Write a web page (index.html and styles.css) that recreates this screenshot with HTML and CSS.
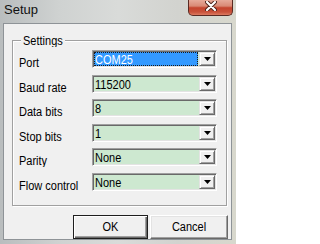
FILE: index.html
```html
<!DOCTYPE html>
<html>
<head>
<meta charset="utf-8">
<link rel="stylesheet" href="styles.css">
</head>
<body>
<div class="window">
  <div class="titlebar">
    <span class="title">Setup</span>
    <div class="close">
      <svg width="12" height="10" viewBox="0 0 12 10">
        <path d="M2 1 L10 9 M10 1 L2 9" stroke="#4a2018" stroke-width="4" stroke-linecap="round"/>
        <path d="M2 1 L10 9 M10 1 L2 9" stroke="#ffffff" stroke-width="2.2" stroke-linecap="round"/>
      </svg>
    </div>
  </div>
  <div class="client">
    <div class="group">
      <span class="legend"><span class="t">Settings</span></span>
      <div class="rows">
        <span class="label"><span class="t">Port</span></span>
        <div class="combo"><div class="value sel"><span class="t">COM25</span></div><div class="drop"><svg width="7" height="4" viewBox="0 0 7 4"><polygon points="0,0 7,0 3.5,4" fill="#000"/></svg></div></div>
        <span class="label"><span class="t">Baud rate</span></span>
        <div class="combo"><div class="value"><span class="t">115200</span></div><div class="drop"><svg width="7" height="4" viewBox="0 0 7 4"><polygon points="0,0 7,0 3.5,4" fill="#000"/></svg></div></div>
        <span class="label"><span class="t">Data bits</span></span>
        <div class="combo"><div class="value"><span class="t">8</span></div><div class="drop"><svg width="7" height="4" viewBox="0 0 7 4"><polygon points="0,0 7,0 3.5,4" fill="#000"/></svg></div></div>
        <span class="label"><span class="t">Stop bits</span></span>
        <div class="combo"><div class="value"><span class="t">1</span></div><div class="drop"><svg width="7" height="4" viewBox="0 0 7 4"><polygon points="0,0 7,0 3.5,4" fill="#000"/></svg></div></div>
        <span class="label"><span class="t">Parity</span></span>
        <div class="combo"><div class="value"><span class="t">None</span></div><div class="drop"><svg width="7" height="4" viewBox="0 0 7 4"><polygon points="0,0 7,0 3.5,4" fill="#000"/></svg></div></div>
        <span class="label"><span class="t">Flow control</span></span>
        <div class="combo"><div class="value"><span class="t">None</span></div><div class="drop"><svg width="7" height="4" viewBox="0 0 7 4"><polygon points="0,0 7,0 3.5,4" fill="#000"/></svg></div></div>
      </div>
    </div>
    <div class="buttons">
      <div class="btn default"><span class="t">OK</span></div>
      <div class="btn"><span class="t">Cancel</span></div>
    </div>
  </div>
</div>
</body>
</html>
```
FILE: styles.css
```css
html, body {
  margin: 0;
  padding: 0;
}
body {
  width: 236px;
  height: 244px;
  overflow: hidden;
  font-family: "Liberation Sans", Arial, sans-serif;
  font-size: 11px;
  color: #000;
}
.window {
  width: 236px;
  height: 244px;
  display: flex;
  flex-direction: column;
  background: linear-gradient(90deg, #b9bdbe 0%, #cfd2d1 25%, #d9dbd9 50%, #d2d3cf 75%, #d8d8cd 100%);
}
.titlebar {
  height: 23px;
  flex: none;
  display: flex;
  justify-content: space-between;
  align-items: flex-start;
}
.title {
  margin: 2px 0 0 4px;
  font-size: 13px;
  line-height: 15px;
  color: #111;
}
.close {
  width: 45px;
  height: 16px;
  box-sizing: border-box;
  margin-right: 3px;
  border: 1px solid #5a2a22;
  border-top: none;
  border-radius: 0 0 5px 5px;
  background: linear-gradient(#e6aa9a 0%, #d98a76 40%, #c4442e 52%, #c9523a 80%, #dc7a60 100%);
  display: flex;
  justify-content: center;
  align-items: center;
  padding-bottom: 3px;
}
.client {
  flex: 1;
  margin: 0 4px 4px 3px;
  border: 1px solid #8e9397;
  background: #f0f0f0;
  display: flex;
  flex-direction: column;
}
.t {
  display: inline-block;
  transform: scaleY(1.15);
  white-space: nowrap;
}
.group {
  position: relative;
  margin: 16px 4px 0 8px;
  border: 1px solid #a0a0a0;
  box-shadow: inset 1px 1px 0 #fff, 1px 1px 0 #fff;
  padding: 9px 9px 13px 6px;
}
.legend {
  position: absolute;
  top: -7px;
  left: 8px;
  padding: 0 2px;
  line-height: 13px;
  background: #f0f0f0;
}
.rows {
  display: grid;
  grid-template-columns: 73px 125px;
  row-gap: 5.6px;
}
.label {
  padding-top: 6px;
  line-height: 13px;
}
.combo {
  height: 18px;
  box-sizing: border-box;
  border: 1px solid;
  border-color: #a0a0a0 #ffffff #ffffff #a0a0a0;
  box-shadow: inset 1px 1px 0 #696969, inset -1px -1px 0 #e3e3e3;
  padding: 1px;
  background: #cde8d0;
  display: flex;
}
.value {
  flex: 1;
  line-height: 13px;
  padding: 1px 0 0 1px;
}
.value.sel {
  background: #3399ff;
  color: #fff;
  outline: 1px dotted #1a1a1a;
  outline-offset: -1px;
  margin-right: 1px;
}
.drop {
  width: 16px;
  flex: none;
  box-sizing: border-box;
  background: #f0f0f0;
  border: 1px solid;
  border-color: #e3e3e3 #696969 #696969 #e3e3e3;
  box-shadow: inset 1px 1px 0 #fff, inset -1px -1px 0 #a0a0a0;
  display: flex;
  justify-content: center;
  align-items: center;
}
.buttons {
  display: flex;
  justify-content: flex-end;
  gap: 2px;
  margin-top: 9px;
  padding-right: 3px;
}
.btn {
  width: 78px;
  height: 24px;
  box-sizing: border-box;
  border: 1px solid;
  border-color: #fff #696969 #696969 #fff;
  box-shadow: inset -1px -1px 0 #a0a0a0, inset 1px 1px 0 #e3e3e3;
  background: #f0f0f0;
  display: flex;
  align-items: center;
  justify-content: center;
  line-height: 13px;
}
.btn.default {
  width: 75px;
  border: 1px solid #1e1e1e;
  box-shadow: inset 1px 1px 0 #fff, inset -1px -1px 0 #696969, inset -2px -2px 0 #a0a0a0;
}
```
